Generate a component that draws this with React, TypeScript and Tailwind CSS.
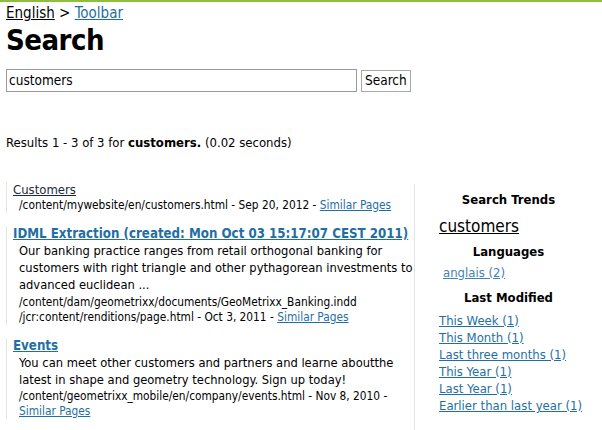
import React from "react";

const F = { fontFamily: "'DejaVu Sans Condensed', 'DejaVu Sans', sans-serif" };

function Block({ children }: { children: React.ReactNode }) {
  return <div className="border-l border-[#e3e3e3] pl-[6px]">{children}</div>;
}

export default function App() {
  return (
    <div className="w-[602px] h-[430px] overflow-hidden bg-white text-black" style={F}>
      <div className="h-[2px] bg-[#8cbf3c]" />
      <div className="pl-[6px]">
        <div className="text-[15px] leading-[18px] mt-[2px]">
          <a className="underline text-black">English</a>
          <span> &gt; </span>
          <a className="underline text-[#1f6fa3]">Toolbar</a>
        </div>
        <h1 className="text-[29px] font-bold leading-[34px] mt-[1px] tracking-[-0.5px]">Search</h1>
        <div className="flex items-center gap-[4px] mt-[12px]">
          <div className="w-[351px] h-[23px] border border-[#9a9a9a] flex items-center pl-[2px] text-[13.5px]">customers</div>
          <div className="h-[22px] px-[3px] border border-[#a8a8a8] flex items-center text-[13.5px]">Search</div>
        </div>
        <div className="mt-[43px] text-[13px] leading-[16px]">
          Results 1 - 3 of 3 for <b>customers.</b> (0.02 seconds)
        </div>
        <div className="flex mt-[31px]">
          <div className="w-[408px] flex flex-col gap-[13px]">
            <Block>
              <a className="underline text-[#1b2a3a] text-[13px] leading-[16px] block">Customers</a>
              <div className="pl-[6px] text-[11.8px] leading-[15px]">
                /content/mywebsite/en/customers.html - Sep 20, 2012 - <a className="underline text-[#1f6fa3]">Similar Pages</a>
              </div>
            </Block>
            <Block>
              <a className="underline text-[#1f6fa3] font-bold text-[13.2px] leading-[16px] block">IDML Extraction (created: Mon Oct 03 15:17:07 CEST 2011)</a>
              <div className="pl-[6px] text-[12.8px] leading-[17px]">
                Our banking practice ranges from retail orthogonal banking for customers with right triangle and other pythagorean investments to advanced euclidean ...
              </div>
              <div className="pl-[6px] mt-[2px] text-[11.8px] leading-[15px]">
                /content/dam/geometrixx/documents/GeoMetrixx_Banking.indd<br />/jcr:content/renditions/page.html - Oct 3, 2011 - <a className="underline text-[#1f6fa3]">Similar Pages</a>
              </div>
            </Block>
            <Block>
              <a className="underline text-[#1f6fa3] font-bold text-[13.2px] leading-[16px] block">Events</a>
              <div className="pl-[6px] text-[12.8px] leading-[17px]">
                You can meet other customers and partners and learne aboutthe latest in shape and geometry technology. Sign up today!
              </div>
              <div className="pl-[6px] mt-[1px] text-[11.8px] leading-[15px]">
                /content/geometrixx_mobile/en/company/events.html - Nov 8, 2010 - <a className="underline text-[#1f6fa3]">Similar Pages</a>
              </div>
            </Block>
          </div>
          <div className="flex-1 border-l border-[#e3e3e3] mt-[2px] pt-[8px] h-[260px]">
            <div className="text-center font-bold text-[13px] leading-[16px]">Search Trends</div>
            <div className="pl-[24px] mt-[8px] text-[17px] leading-[20px]">
              <a className="underline text-black">customers</a>
            </div>
            <div className="text-center font-bold text-[13px] leading-[16px] mt-[8px]">Languages</div>
            <div className="pl-[28px] mt-[4px] text-[13px] leading-[17px]">
              <a className="underline text-[#3f82b5]">anglais (2)</a>
            </div>
            <div className="text-center font-bold text-[13px] leading-[16px] mt-[9px]">Last Modified</div>
            <div className="pl-[24px] mt-[6px] text-[13px] leading-[17px] flex flex-col items-start">
              <a className="underline text-[#1f6fa3]">This Week (1)</a>
              <a className="underline text-[#1f6fa3]">This Month (1)</a>
              <a className="underline text-[#1f6fa3]">Last three months (1)</a>
              <a className="underline text-[#1f6fa3]">This Year (1)</a>
              <a className="underline text-[#1f6fa3]">Last Year (1)</a>
              <a className="underline text-[#1f6fa3]">Earlier than last year (1)</a>
            </div>
          </div>
        </div>
      </div>
    </div>
  );
}
